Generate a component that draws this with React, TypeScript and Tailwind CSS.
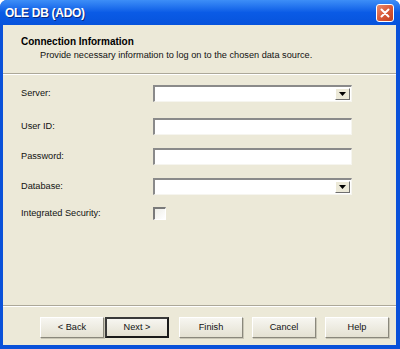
const font = { fontFamily: '"Liberation Sans", Arial, sans-serif' };

const Field = ({ combo }: { combo?: boolean }) => (
  <div className="flex h-[17px] w-[199px] border-t-2 border-l-2 border-b border-r border-t-[#8a8a8a] border-l-[#8a8a8a] border-b-[#f6f5ef] border-r-[#f6f5ef] bg-white">
    <div className="flex-1" />
    {combo && (
      <div className="m-px flex w-[15px] items-center justify-center border border-t-white border-l-white border-b-[#6f6f6f] border-r-[#6f6f6f] bg-[#ece9d8]">
        <svg width="7" height="4" viewBox="0 0 7 4">
          <path d="M0 0h7L3.5 4z" fill="#000" />
        </svg>
      </div>
    )}
  </div>
);

const Row = ({ label, mt, children }: { label: string; mt: string; children: React.ReactNode }) => (
  <div className={`flex items-center ${mt}`}>
    <div className="w-[147px] pl-[18px] text-[9.2px] text-[#111]">{label}</div>
    <div className="pl-[3px]">{children}</div>
  </div>
);

const Btn = ({ label, primary, className }: { label: string; primary?: boolean; className?: string }) => (
  <div
    className={`flex h-[21px] w-[64px] items-center justify-center text-[9.2px] text-[#111] bg-linear-to-b from-[#f7f6f1] to-[#e4e1d2] ${
      primary
        ? "border-2 border-t-[#3a3a3a] border-l-[#3a3a3a] border-b-[#1a1a1a] border-r-[#1a1a1a]"
        : "border border-t-white border-l-white border-b-[#8a887c] border-r-[#8a887c] shadow-[1px_1px_0_#c9c6b6]"
    } ${className ?? ""}`}
  >
    {label}
  </div>
);

export default function App() {
  return (
    <div className="w-[400px] h-[349px] flex flex-col bg-[#0a51d9] rounded-t-[7px] overflow-hidden" style={font}>
      <div className="flex h-[25px] shrink-0 items-center justify-between bg-linear-to-b from-[#3d8ef7] via-[#0a5be6] to-[#0753dc] pl-[5px] pr-[6px]">
        <span className="text-[12px] font-bold text-white tracking-[-0.3px] [text-shadow:1px_1px_0_#0a2a80]">OLE DB (ADO)</span>
        <div className="flex h-[18px] w-[18px] items-center justify-center rounded-[3px] border border-white bg-linear-to-br from-[#e98b6e] via-[#d95a3a] to-[#c0401f]">
          <svg width="10" height="10" viewBox="0 0 10 10">
            <path d="M1.5 1.5l7 7M8.5 1.5l-7 7" stroke="#fff" strokeWidth="2" strokeLinecap="round" />
          </svg>
        </div>
      </div>
      <div className="mx-[3px] mr-[4px] mb-[4px] flex flex-1 flex-col bg-[#ece9d8]">
        <div className="h-[48px] shrink-0 pl-[18px] pt-[10px]">
          <div className="text-[10px] font-bold leading-[13px] text-black">Connection Information</div>
          <div className="pl-[19px] pt-[1px] text-[9.2px] leading-[13px] text-[#111]">
            Provide necessary information to log on to the chosen data source.
          </div>
        </div>
        <div className="h-px bg-[#aca899]" />
        <div className="h-px bg-white" />
        <div className="flex flex-1 flex-col">
          <Row label="Server:" mt="mt-[10px]">
            <Field combo />
          </Row>
          <Row label="User ID:" mt="mt-[16px]">
            <Field />
          </Row>
          <Row label="Password:" mt="mt-[13px]">
            <Field />
          </Row>
          <Row label="Database:" mt="mt-[13px]">
            <Field combo />
          </Row>
          <Row label="Integrated Security:" mt="mt-[12px]">
            <div className="h-[13px] w-[13px] border-t-2 border-l-2 border-b border-r border-t-[#7a7a7a] border-l-[#7a7a7a] border-b-white border-r-white bg-linear-to-br from-[#eeeee8] to-white" />
          </Row>
        </div>
        <div className="h-px bg-[#aca899]" />
        <div className="h-px bg-white" />
        <div className="flex h-[38px] shrink-0 pt-[10px] pl-[37px]">
          <Btn label="< Back" />
          <Btn label="Next >" primary className="ml-px" />
          <Btn label="Finish" className="ml-[10px]" />
          <Btn label="Cancel" className="ml-[9px]" />
          <Btn label="Help" className="ml-[9px]" />
        </div>
      </div>
    </div>
  );
}
